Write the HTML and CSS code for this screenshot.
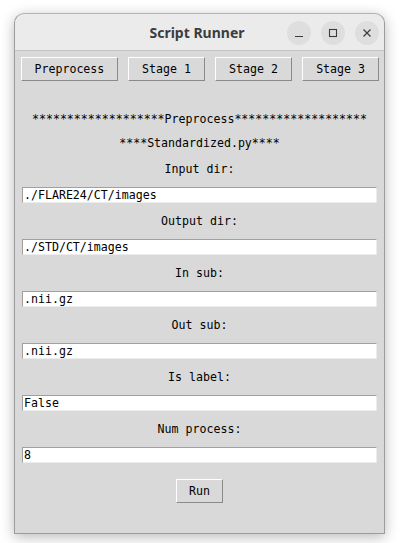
FILE: index.html
```html
<!DOCTYPE html>
<html>
<head>
<meta charset="utf-8">
<link rel="stylesheet" href="styles.css">
</head>
<body>
<div class="window">
  <div class="titlebar">
    <div class="spacer"></div>
    <div class="title">Script Runner</div>
    <div class="controls">
      <span class="ctl"><svg width="24" height="24" viewBox="0 0 24 24"><line x1="8" y1="15.5" x2="16" y2="15.5" stroke="#3c3c3c" stroke-width="1.2"/></svg></span>
      <span class="ctl"><svg width="24" height="24" viewBox="0 0 24 24"><rect x="8.5" y="8.5" width="7" height="7" fill="none" stroke="#3c3c3c" stroke-width="1.1"/></svg></span>
      <span class="ctl"><svg width="24" height="24" viewBox="0 0 24 24"><path d="M8.5 8.5 L15.5 15.5 M15.5 8.5 L8.5 15.5" stroke="#3c3c3c" stroke-width="1.2"/></svg></span>
    </div>
  </div>
  <div class="content">
    <div class="tabs">
      <button class="btn">Preprocess</button>
      <button class="btn">Stage 1</button>
      <button class="btn">Stage 2</button>
      <button class="btn">Stage 3</button>
    </div>
    <div class="heading">*******************Preprocess*******************</div>
    <div class="sub">****Standardized.py****</div>
    <div class="group">
      <div class="label">Input dir:</div>
      <div class="field">./FLARE24/CT/images</div>
    </div>
    <div class="group">
      <div class="label">Output dir:</div>
      <div class="field">./STD/CT/images</div>
    </div>
    <div class="group">
      <div class="label">In sub:</div>
      <div class="field">.nii.gz</div>
    </div>
    <div class="group">
      <div class="label">Out sub:</div>
      <div class="field">.nii.gz</div>
    </div>
    <div class="group">
      <div class="label">Is label:</div>
      <div class="field">False</div>
    </div>
    <div class="group">
      <div class="label">Num process:</div>
      <div class="field">8</div>
    </div>
    <div class="runrow"><button class="btn run">Run</button></div>
  </div>
</div>
</body>
</html>
```
FILE: styles.css
```css
html, body {
  margin: 0;
  padding: 0;
  background: #ffffff;
}
body {
  padding: 13px 0 0 14px;
  width: 402px;
  height: 543px;
  box-sizing: border-box;
  overflow: hidden;
}
.window {
  width: 371px;
  height: 521px;
  box-sizing: border-box;
  border: 1px solid #9c9c9c;
  border-top-color: #b4b4b4;
  border-radius: 10px 10px 0 0;
  background: #d9d9d9;
  box-shadow: 0 3px 14px rgba(0,0,0,0.28);
  display: flex;
  flex-direction: column;
  overflow: hidden;
}
.titlebar {
  height: 36px;
  background: #ebebeb;
  border-bottom: 1px solid #c4c4c4;
  display: grid;
  grid-template-columns: 1fr auto 1fr;
  align-items: center;
  padding-right: 5px;
  border-radius: 9px 9px 0 0;
}
.title {
  font-family: "Noto Sans", "Open Sans", sans-serif;
  font-weight: bold;
  font-size: 14px;
  color: #3d3d3d;
  padding-top: 1px;
}
.controls {
  justify-self: end;
  display: flex;
  gap: 10px;
  padding-top: 1px;
}
.ctl {
  width: 24px;
  height: 24px;
  border-radius: 50%;
  background: #dedede;
  display: block;
}
.ctl svg { display: block; }
.content {
  flex: 1;
  display: flex;
  flex-direction: column;
  font-family: "DejaVu Sans Mono", "Liberation Mono", monospace;
  font-size: 11.6px;
  color: #000;
}
.tabs {
  display: flex;
  justify-content: space-between;
  padding: 6px 5px 0 6px;
}
.btn {
  font-family: "DejaVu Sans Mono", "Liberation Mono", monospace;
  font-size: 11.6px;
  color: #000;
  background: #d9d9d9;
  height: 24px;
  padding: 0 13px;
  margin: 0;
  border: 1px solid;
  border-color: #ffffff #8a8a8a #8a8a8a #ffffff;
  border-radius: 0;
  line-height: 22px;
}
.tabs .btn:first-child { padding: 0 12.5px; }
.heading {
  margin-top: 30px;
  height: 16px;
  line-height: 16px;
  text-align: center;
  white-space: pre;
}
.sub {
  margin-top: 8px;
  height: 16px;
  line-height: 16px;
  text-align: center;
}
.group {
  margin-top: 10px;
  display: flex;
  flex-direction: column;
}
.label {
  height: 16px;
  line-height: 16px;
  text-align: center;
}
.field {
  margin: 10px 7px 0 7px;
  height: 16px;
  box-sizing: border-box;
  background: #ffffff;
  border: 1px solid;
  border-color: #a0a0a0 #ececec #ececec #a0a0a0;
  line-height: 14px;
  padding-left: 1px;
  white-space: pre;
}
.runrow {
  margin-top: 16px;
  display: flex;
  justify-content: center;
}
.run {
  width: 47px;
  padding: 0;
}
```
